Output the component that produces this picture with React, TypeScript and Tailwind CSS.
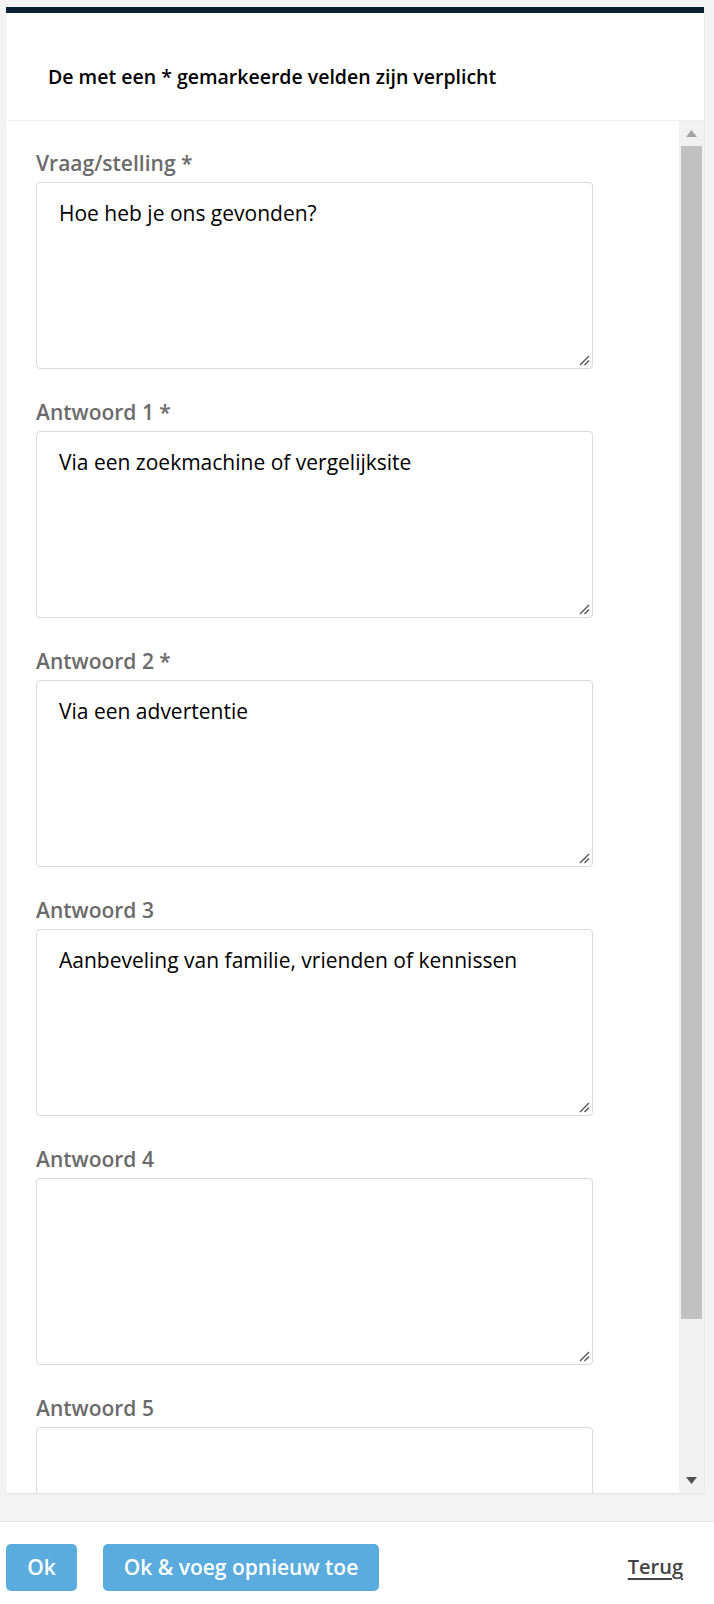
import React from "react";

const fields = [
  { label: "Vraag/stelling *", value: "Hoe heb je ons gevonden?" },
  { label: "Antwoord 1 *", value: "Via een zoekmachine of vergelijksite" },
  { label: "Antwoord 2 *", value: "Via een advertentie" },
  { label: "Antwoord 3", value: "Aanbeveling van familie, vrienden of kennissen" },
  { label: "Antwoord 4", value: "" },
  { label: "Antwoord 5", value: "" },
];

const font = { fontFamily: '"Open Sans", "Noto Sans", sans-serif' };

const Scrollbar = () => (
  <div className="flex w-[25px] shrink-0 flex-col bg-[#f1f1f1]">
    <div className="flex h-[25px] items-center justify-center">
      <svg width="11" height="7" viewBox="0 0 11 7">
        <path d="M5.5 0 L11 7 L0 7 Z" fill="#a3a3a3" />
      </svg>
    </div>
    <div className="mx-[2px] h-[1173px] bg-[#c1c1c1]" />
    <div className="flex-1" />
    <div className="flex h-[25px] items-center justify-center">
      <svg width="11" height="7" viewBox="0 0 11 7">
        <path d="M0 0 L11 0 L5.5 7 Z" fill="#505050" />
      </svg>
    </div>
  </div>
);

// grip drawn in the corner, same as the browser handle in the screenshot
const Grip = () => (
  <svg
    className="pointer-events-none absolute bottom-[3px] right-[3px]"
    width="12"
    height="12"
    viewBox="0 0 12 12"
  >
    <path d="M11 2 L2 11 M11 6.5 L6.5 11" stroke="#555" strokeWidth="1.4" />
  </svg>
);

export default function App() {
  return (
    <div className="flex h-[1604px] w-[714px] flex-col bg-[#f3f3f3]" style={font}>
      <div className="ml-[6px] mr-[10px] mt-[7px] flex h-[1486px] flex-col bg-white shadow-[0_1px_2px_rgba(0,0,0,0.08)]">
        <div className="h-[6px] bg-[#0b1f35]" />
        <div className="h-[108px] border-b border-[#efefef] pl-[42px] pt-[50px]">
          <p className="text-[19.5px] font-semibold leading-[28px] text-black">
            De met een * gemarkeerde velden zijn verplicht
          </p>
        </div>
        <div className="flex min-h-0 flex-1">
          <div className="min-w-0 flex-1 overflow-hidden pl-[30px] pt-[29px]">
            {fields.map((f) => (
              <div key={f.label} className="mb-[30px]">
                <label className="mb-[6px] block text-[21px] font-semibold leading-[26px] text-[#6b6b6b]">
                  {f.label}
                </label>
                <div className="relative w-[557px]">
                  <textarea
                    readOnly
                    defaultValue={f.value}
                    className="block h-[187px] w-full resize-none rounded-[4px] border border-[#d9d9d9] bg-white px-[22px] pt-[16px] text-[21px] leading-[28px] text-black outline-none"
                    style={font}
                  />
                  <Grip />
                </div>
              </div>
            ))}
          </div>
          <Scrollbar />
        </div>
      </div>
      <div className="mt-[28px] flex flex-1 items-start border-t border-[#e5e5e5] bg-white pl-[6px] pr-[31px] pt-[22px]">
        <button className="h-[47px] w-[71px] rounded-[5px] bg-[#5aacdf] text-[21px] font-semibold text-white">
          Ok
        </button>
        <button className="ml-[26px] h-[47px] w-[276px] rounded-[5px] bg-[#5aacdf] text-[21px] font-semibold text-white">
          Ok &amp; voeg opnieuw toe
        </button>
        <a className="ml-auto mt-[9px] text-[20px] font-semibold leading-[28px] text-[#444] underline underline-offset-[4px]" href="#">
          Terug
        </a>
      </div>
    </div>
  );
}
